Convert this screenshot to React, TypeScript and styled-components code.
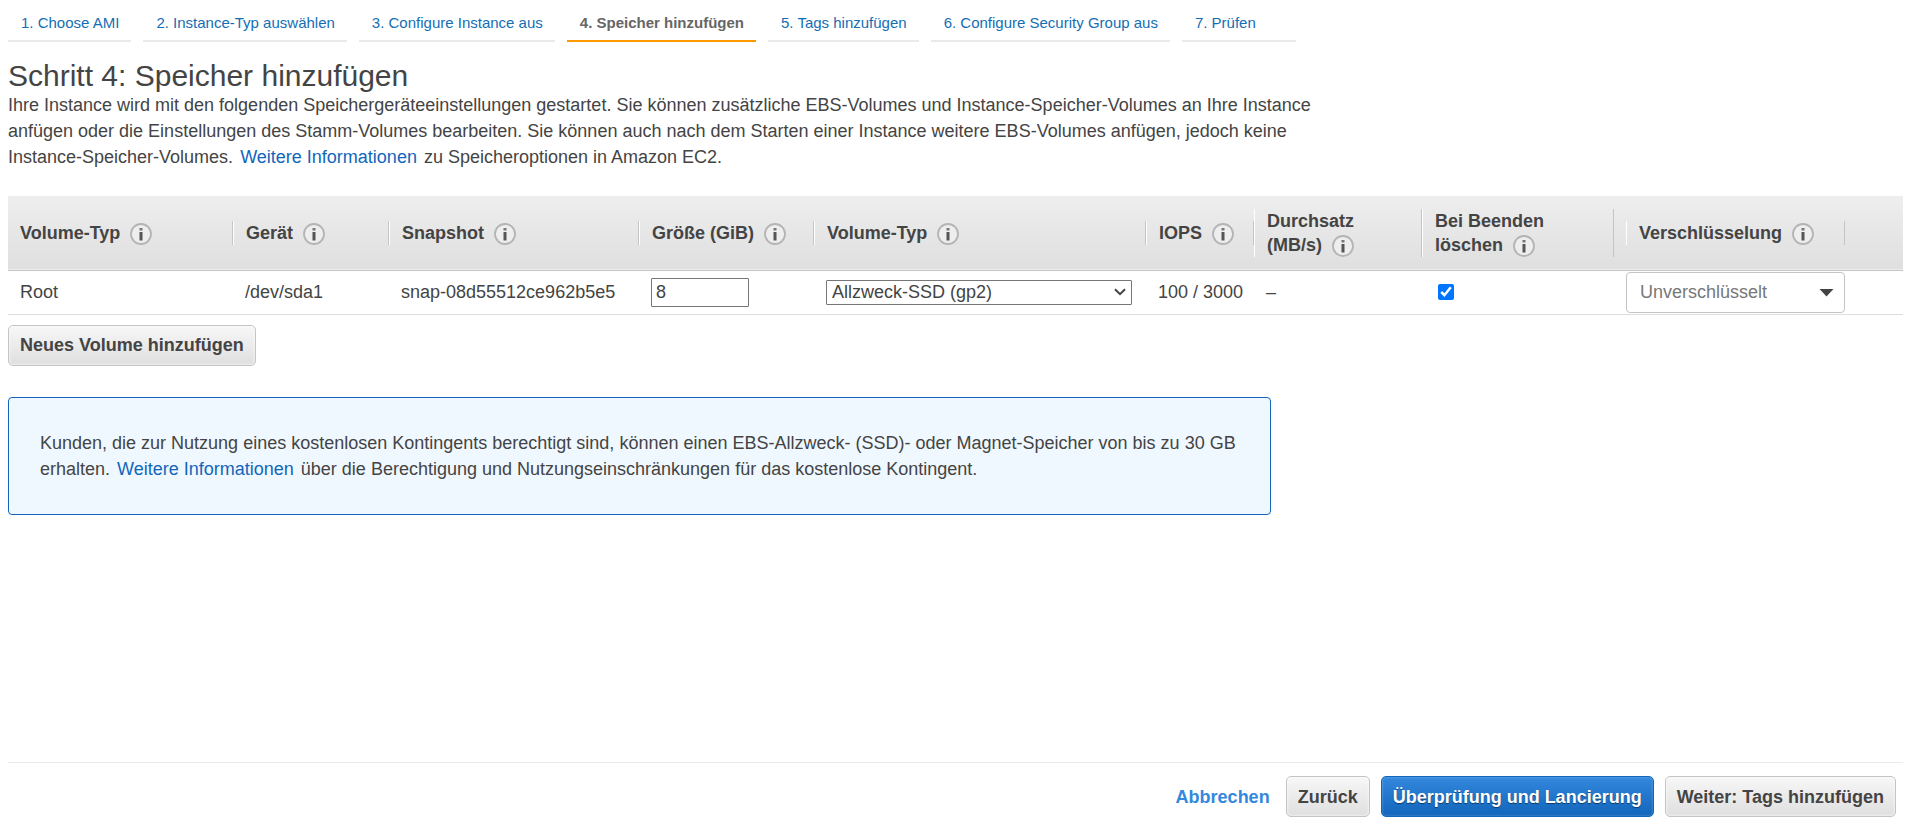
import React from 'react';
import styled, { createGlobalStyle, css } from 'styled-components';

const GlobalStyle = createGlobalStyle`
  *, *::before, *::after { box-sizing: border-box; }
  body {
    margin: 0;
    background: #fff;
    color: #444;
    font: 18px/26px "Liberation Sans", Arial, sans-serif;
  }
  button, input, select { font: inherit; color: inherit; margin: 0; }
  a { text-decoration: none; }
`;

const Page = styled.div`
  display: flex;
  flex-direction: column;
  min-height: 100vh;
  padding: 0 4px 10px 8px;
`;

const Steps = styled.nav`
  display: flex;
  flex-wrap: wrap;
  gap: 12px;
`;

const Step = styled.a<{ $active?: boolean; $last?: boolean }>`
  padding: 10px ${(p) => (p.$last ? 40 : 12)}px 4px 13px;
  border-bottom: 2px solid ${(p) => (p.$active ? '#f90' : '#eaeaea')};
  color: ${(p) => (p.$active ? '#666' : '#146eb4')};
  font-size: 15px;
  font-weight: ${(p) => (p.$active ? 700 : 400)};
  white-space: nowrap;
`;

const Title = styled.h1`
  margin: 17px 0 0;
  font-size: 30px;
  line-height: 33px;
  font-weight: 400;
`;

const Intro = styled.p`
  margin: 0 0 26px;
  max-width: 1310px;
`;

const TextLink = styled.a`
  margin: 0 2px;
  color: #1166bb;
`;

const VolumeTable = styled.table`
  width: 100%;
  table-layout: fixed;
  border-collapse: collapse;
`;

const Column = styled.col<{ $width?: number }>`
  ${(p) => p.$width && css`width: ${p.$width}px;`}
`;

const HeadRow = styled.tr`
  height: 74px;
  background: linear-gradient(#eee, #dfdfdf);
  border-bottom: 1px solid #c4c4c4;
`;

const HeadCell = styled.th<{ $gap?: boolean }>`
  padding: 0 ${(p) => (p.$gap ? 12 : 0)}px 0 0;
  text-align: left;
`;

const HeadLabel = styled.div<{ $first?: boolean }>`
  padding: 0 12px;
  border-left: ${(p) => (p.$first ? '0' : '1px solid #fff')};
  border-right: 1px solid #c4c4c4;
  line-height: 24px;
`;

const InfoIcon = styled.svg`
  width: 22px;
  height: 22px;
  margin-left: 10px;
  vertical-align: -6px;
`;

const BodyRow = styled.tr`
  height: 44px;
  border-bottom: 1px solid #ddd;
`;

const Cell = styled.td<{ $pad?: number }>`
  padding: 0 0 0 ${(p) => p.$pad ?? 12}px;
  white-space: nowrap;
`;

const SizeInput = styled.input`
  display: block;
  width: 98px;
  height: 29px;
  padding: 0 4px;
  border: 1px solid #767676;
  border-radius: 1px;
`;

const SelectFrame = styled.div<{ $width: number }>`
  position: relative;
  width: ${(p) => p.$width}px;
`;

const TypeSelect = styled.select`
  display: block;
  appearance: none;
  width: 100%;
  height: 25px;
  padding: 0 24px 0 5px;
  border: 1px solid #767676;
  border-radius: 1px;
  background: #fff;
  line-height: 22px;
`;

const EncryptionSelect = styled(TypeSelect)`
  height: 41px;
  padding: 0 36px 0 13px;
  border-color: #c4c4c4;
  border-radius: 4px;
  color: #777;
`;

const Arrow = styled.svg<{ $right: number }>`
  position: absolute;
  right: ${(p) => p.$right}px;
  top: 50%;
  margin-top: -4px;
  pointer-events: none;
`;

const Check = styled.input`
  display: block;
  width: 16px;
  height: 16px;
  accent-color: #0075ff;
`;

const Button = styled.button<{ $primary?: boolean }>`
  height: 41px;
  padding: 0 11px;
  border: 1px solid #c4c4c4;
  border-radius: 5px;
  background: linear-gradient(#f7f7f7, #dfdfdf);
  box-shadow: inset 0 0 2px 1px rgba(255, 255, 255, 0.5);
  color: #444;
  font-weight: 700;
  white-space: nowrap;
  ${(p) =>
    p.$primary &&
    css`
      border-color: #1166bb;
      background: linear-gradient(#3388dd, #1166bb);
      box-shadow: inset 0 0 2px 1px rgba(255, 255, 255, 0.15);
      color: #fff;
      text-shadow: 0 1px 1px rgba(0, 0, 0, 0.5);
    `}
`;

const AddRow = styled.div`
  padding: 10px 0 31px;
`;

const Notice = styled.aside`
  max-width: 1263px;
  padding: 32px 31px;
  border: 1px solid #1166bb;
  border-radius: 4px;
  background: #f0f8ff;
`;

const NoticeText = styled.p`
  margin: 0;
`;

const Footer = styled.footer`
  display: flex;
  justify-content: flex-end;
  align-items: center;
  gap: 11px;
  margin-top: auto;
  padding: 13px 7px 0 0;
  border-top: 1px solid #eaeaea;
`;

const Cancel = styled.a`
  margin-right: 5px;
  color: #3388dd;
  font-weight: 700;
`;

const Info = () => (
  <InfoIcon viewBox="0 0 22 22" aria-hidden="true">
    <circle cx="11" cy="11" r="10" fill="#eee" stroke="#b4b4b4" strokeWidth="1.8" />
    <rect x="9.5" y="5" width="3" height="2.5" fill="#777" />
    <rect x="9.5" y="9" width="3" height="8.5" fill="#555" />
  </InfoIcon>
);

const steps = [
  '1. Choose AMI',
  '2. Instance-Typ auswählen',
  '3. Configure Instance aus',
  '4. Speicher hinzufügen',
  '5. Tags hinzufügen',
  '6. Configure Security Group aus',
  '7. Prüfen',
];

const columns = [
  { label: 'Volume-Typ', width: 225 },
  { label: 'Gerät', width: 156 },
  { label: 'Snapshot', width: 250 },
  { label: 'Größe (GiB)', width: 175 },
  { label: 'Volume-Typ', width: 332 },
  { label: 'IOPS', width: 108 },
  { label: 'Durchsatz (MB/s)', width: 168 },
  { label: 'Bei Beenden löschen', width: 204, gap: true },
  { label: 'Verschlüsselung', width: 219 },
];

export default function App() {
  return (
    <Page>
      <GlobalStyle />
      <Steps aria-label="Schritte">
        {steps.map((s, i) => (
          <Step key={s} href="#" $active={i === 3} $last={i === 6} aria-current={i === 3 ? 'step' : undefined}>
            {s}
          </Step>
        ))}
      </Steps>
      <main>
        <Title>Schritt 4: Speicher hinzufügen</Title>
        <Intro>
          Ihre Instance wird mit den folgenden Speichergeräteeinstellungen gestartet. Sie können zusätzliche EBS-Volumes
          und Instance-Speicher-Volumes an Ihre Instance anfügen oder die Einstellungen des Stamm-Volumes bearbeiten. Sie
          können auch nach dem Starten einer Instance weitere EBS-Volumes anfügen, jedoch keine Instance-Speicher-Volumes.{' '}
          <TextLink href="#">Weitere Informationen</TextLink> zu Speicheroptionen in Amazon EC2.
        </Intro>
        <VolumeTable>
          <colgroup>
            {columns.map((c, i) => (
              <Column key={i} $width={c.width} />
            ))}
            <Column />
          </colgroup>
          <thead>
            <HeadRow>
              {columns.map((c, i) => (
                <HeadCell key={i} scope="col" $gap={c.gap}>
                  <HeadLabel $first={i === 0}>
                    {c.label}
                    <Info />
                  </HeadLabel>
                </HeadCell>
              ))}
              <HeadCell as="td" />
            </HeadRow>
          </thead>
          <tbody>
            <BodyRow>
              <Cell>Root</Cell>
              <Cell>/dev/sda1</Cell>
              <Cell>snap-08d55512ce962b5e5</Cell>
              <Cell>
                <SizeInput type="text" defaultValue="8" aria-label="Größe (GiB)" />
              </Cell>
              <Cell>
                <SelectFrame $width={306}>
                  <TypeSelect aria-label="Volume-Typ">
                    <option>Allzweck-SSD (gp2)</option>
                  </TypeSelect>
                  <Arrow $right={6} width="12" height="8" viewBox="0 0 12 8" aria-hidden="true">
                    <path d="M1 1.2l5 5 5-5" fill="none" stroke="#444" strokeWidth="2" />
                  </Arrow>
                </SelectFrame>
              </Cell>
              <Cell>100 / 3000</Cell>
              <Cell>–</Cell>
              <Cell $pad={16}>
                <Check type="checkbox" defaultChecked aria-label="Bei Beenden löschen" />
              </Cell>
              <Cell $pad={0}>
                <SelectFrame $width={219}>
                  <EncryptionSelect aria-label="Verschlüsselung">
                    <option>Unverschlüsselt</option>
                  </EncryptionSelect>
                  <Arrow $right={11} width="15" height="9" viewBox="0 0 15 9" aria-hidden="true">
                    <path d="M0.5 1h14l-7 7.5z" fill="#444" />
                  </Arrow>
                </SelectFrame>
              </Cell>
              <Cell />
            </BodyRow>
          </tbody>
        </VolumeTable>
        <AddRow>
          <Button type="button">Neues Volume hinzufügen</Button>
        </AddRow>
        <Notice>
          <NoticeText>
            Kunden, die zur Nutzung eines kostenlosen Kontingents berechtigt sind, können einen EBS-Allzweck- (SSD)- oder
            Magnet-Speicher von bis zu 30 GB erhalten. <TextLink href="#">Weitere Informationen</TextLink> über die
            Berechtigung und Nutzungseinschränkungen für das kostenlose Kontingent.
          </NoticeText>
        </Notice>
      </main>
      <Footer>
        <Cancel href="#">Abbrechen</Cancel>
        <Button type="button">Zurück</Button>
        <Button type="button" $primary>
          Überprüfung und Lancierung
        </Button>
        <Button type="button">Weiter: Tags hinzufügen</Button>
      </Footer>
    </Page>
  );
}
